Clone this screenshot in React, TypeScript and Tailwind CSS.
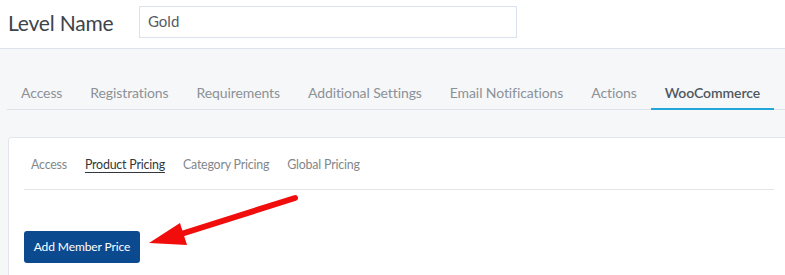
import React from 'react';

const mainTabs = ['Access', 'Registrations', 'Requirements', 'Additional Settings', 'Email Notifications', 'Actions', 'WooCommerce'];
const subTabs = ['Access', 'Product Pricing', 'Category Pricing', 'Global Pricing'];

function RedArrow() {
  return (
    <svg className="absolute left-0 top-0 pointer-events-none" width="785" height="275" viewBox="0 0 785 275">
      <line x1="295" y1="198" x2="178" y2="235" stroke="#f20d0d" strokeWidth="6" strokeLinecap="round" />
      <polygon points="149,243 180,223 187,245" fill="#f20d0d" />
    </svg>
  );
}

export default function App() {
  return (
    <div className="relative w-[785px] h-[275px] overflow-hidden bg-[#f6f7f9]" style={{ fontFamily: 'Lato, "Liberation Sans", sans-serif' }}>
      {/* Level name header */}
      <header className="h-[49px] bg-white border-b border-[#dde4ee] flex items-center pl-2">
        <h1 className="text-[21px] text-[#3c434a] w-[131px] leading-none -mt-[3px] tracking-[-0.2px]">Level Name</h1>
        <div className="w-[378px] h-[32px] border border-[#dbe3ee] bg-white flex items-center pl-2 -mt-[5px]">
          <span className="text-[15px] text-[#555b62]">Gold</span>
        </div>
      </header>

      {/* Main tabs */}
      <nav className="mt-[27px] ml-[7px] flex border-b border-[#dde3ec] h-[34px] items-stretch">
        {mainTabs.map((t) => (
          <div
            key={t}
            className={`px-[14px] flex items-center text-[14px] tracking-[-0.1px] ${
              t === 'WooCommerce'
                ? 'text-[#50575e] font-semibold border-b-2 border-[#22a7d8] -mb-px'
                : 'text-[#8c9196]'
            }`}
          >
            {t}
          </div>
        ))}
      </nav>

      {/* Card */}
      <section className="mt-[27px] ml-2 w-[782px] h-[160px] bg-white border border-[#e3e7ec] rounded-[3px] px-[15px]">
        <div className="flex gap-[18px] h-[52px] items-center border-b border-[#e2e4e7] pl-[7px] pt-[4px]">
          {subTabs.map((t) => (
            <span
              key={t}
              className={`text-[12.4px] tracking-[-0.2px] ${
                t === 'Product Pricing' ? 'text-[#32373c] underline underline-offset-[3px]' : 'text-[#82878c]'
              }`}
            >
              {t}
            </span>
          ))}
        </div>
        <button className="mt-[41px] w-[116px] h-[32px] rounded-[3px] bg-[#0c4a8f] text-white text-[12px] tracking-[-0.1px]">
          Add Member Price
        </button>
      </section>

      <RedArrow />
    </div>
  );
}
